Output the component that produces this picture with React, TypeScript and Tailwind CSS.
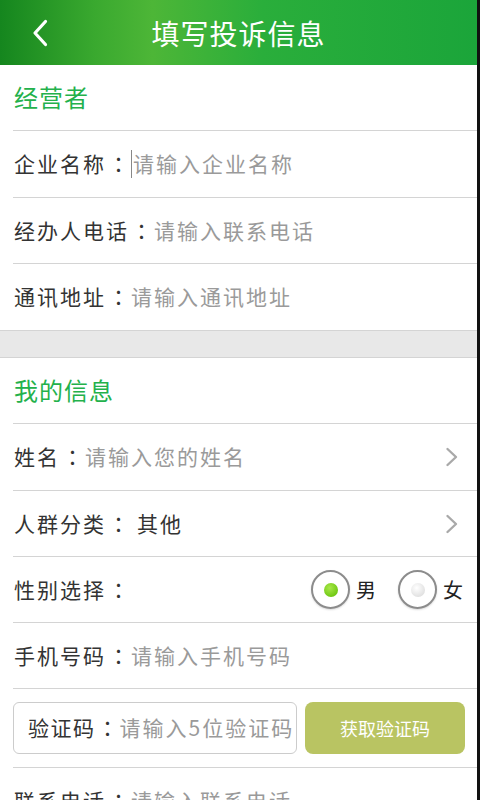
const FONT = { fontFamily: '"Noto Sans CJK SC", "Noto Sans", sans-serif' };

// centred full-width colon, as on the device
function Colon() {
  return (
    <span
      className="inline-block w-[25px] text-center text-[21px] text-[#333333]"
      style={{ fontFamily: '"Noto Sans CJK TC", "Noto Sans CJK SC", sans-serif' }}
    >
      ：
    </span>
  );
}

function Chevron({ className }: { className?: string }) {
  return (
    <svg viewBox="0 0 14 20" className={className} fill="none">
      <path d="M2.5 2 L11 10 L2.5 18" stroke="currentColor" strokeWidth="2.4" strokeLinecap="round" strokeLinejoin="round" />
    </svg>
  );
}

function SectionTitle({ text }: { text: string }) {
  return (
    <div className="ml-[13px] flex h-[66px] shrink-0 items-center border-b border-[#d4d4d4] pl-[1px]">
      <span className="-mt-[2px] text-[24px] tracking-[1px] text-[#23b14b]">{text}</span>
    </div>
  );
}

function Row({
  label,
  placeholder,
  value,
  cursor,
  arrow,
  first,
}: {
  label: string;
  placeholder?: string;
  value?: string;
  cursor?: boolean;
  arrow?: boolean;
  first?: boolean;
}) {
  return (
    <div
      className={
        "ml-[13px] flex shrink-0 items-center whitespace-nowrap border-b border-[#d4d4d4] pl-[1px] pr-[18px] " +
        (first ? "h-[67px]" : "h-[66px]")
      }
    >
      <span className="text-[21px] tracking-[2px] text-[#333333]">{label}</span>
      <Colon />
      {cursor && <span className="mr-[1px] h-[28px] w-[1px] bg-[#888888]" />}
      {placeholder && (
        <span className="text-[21px] tracking-[2px] text-[#9a9a9a]">{placeholder}</span>
      )}
      {value && <span className="ml-[6px] text-[21px] tracking-[2px] text-[#333333]">{value}</span>}
      {arrow && <Chevron className="ml-auto h-[20px] w-[14px] text-[#a9a9a9]" />}
    </div>
  );
}

function Radio({ checked }: { checked?: boolean }) {
  return (
    <div className="flex h-[39px] w-[39px] items-center justify-center rounded-full border-[2px] border-[#8c8c8c] bg-white shadow-[0_1px_2px_rgba(0,0,0,0.15)]">
      {checked ? (
        <div className="h-[14px] w-[14px] rounded-full bg-[radial-gradient(circle_at_40%_35%,#a8e84a,#72c915_70%,#5fb40d)]" />
      ) : (
        <div className="h-[14px] w-[14px] rounded-full bg-[radial-gradient(circle_at_40%_35%,#ffffff,#e2e2e2_70%,#cfcfcf)]" />
      )}
    </div>
  );
}

export default function App() {
  return (
    <div className="flex h-[800px] w-[480px] overflow-hidden bg-white" style={FONT}>
      <div className="flex min-w-0 flex-1 flex-col">
        {/* header */}
        <div className="relative flex h-[65px] shrink-0 items-center justify-center bg-[linear-gradient(90deg,#15861e_0%,#3aa92f_20%,#4db637_32%,#2aae3b_55%,#1ba53a_100%)]">
          <svg viewBox="0 0 16 28" className="absolute left-[32px] top-[19px] h-[28px] w-[16px] text-white" fill="none">
            <path d="M13.5 2.5 L3 14 L13.5 25.5" stroke="currentColor" strokeWidth="3.2" strokeLinecap="round" strokeLinejoin="round" />
          </svg>
          <span className="text-[28px] tracking-[1px] text-white">填写投诉信息</span>
        </div>

        <SectionTitle text="经营者" />
        <Row label="企业名称" placeholder="请输入企业名称" cursor first />
        <Row label="经办人电话" placeholder="请输入联系电话" />
        <div className="ml-[13px] flex h-[66px] shrink-0 items-center whitespace-nowrap pl-[1px]">
          <span className="text-[21px] tracking-[2px] text-[#333333]">通讯地址</span>
          <Colon />
          <span className="text-[21px] tracking-[2px] text-[#9a9a9a]">请输入通讯地址</span>
        </div>
        <div className="h-[28px] shrink-0 border-y border-[#d4d4d4] bg-[#e8e8e8]" />

        <SectionTitle text="我的信息" />
        <Row label="姓名" placeholder="请输入您的姓名" arrow first />
        <Row label="人群分类" value="其他" arrow />

        <div className="ml-[13px] flex h-[66px] shrink-0 items-center border-b border-[#d4d4d4] pl-[1px] pr-[14px]">
          <span className="text-[21px] tracking-[2px] text-[#333333]">性别选择</span>
          <Colon />
          <div className="ml-auto flex items-center">
            <Radio checked />
            <span className="ml-[6px] text-[20px] text-[#222222]">男</span>
            <div className="ml-[22px]">
              <Radio />
            </div>
            <span className="ml-[6px] text-[20px] text-[#222222]">女</span>
          </div>
        </div>

        <Row label="手机号码" placeholder="请输入手机号码" />

        <div className="ml-[13px] flex h-[79px] shrink-0 items-center border-b border-[#d4d4d4] pr-[12px]">
          <div className="flex h-[52px] w-[284px] shrink-0 items-center overflow-hidden whitespace-nowrap rounded-[6px] border border-[#cccccc] pl-[14px]">
            <span className="text-[21px] tracking-[1.5px] text-[#333333]">验证码</span>
            <span
              className="inline-block w-[24px] text-center text-[21px] text-[#333333]"
              style={{ fontFamily: '"Noto Sans CJK TC", "Noto Sans CJK SC", sans-serif' }}
            >
              ：
            </span>
            <span className="text-[21px] tracking-[2px] text-[#9a9a9a]">请输入5位验证码</span>
          </div>
          <button className="ml-[8px] flex h-[52px] w-[160px] items-center justify-center rounded-[8px] bg-[#b9c462] text-[18px] text-white">
            获取验证码
          </button>
        </div>

        <Row label="联系电话" placeholder="请输入联系电话" />
      </div>
      <div className="w-[3px] shrink-0 bg-[#111111]" />
    </div>
  );
}
